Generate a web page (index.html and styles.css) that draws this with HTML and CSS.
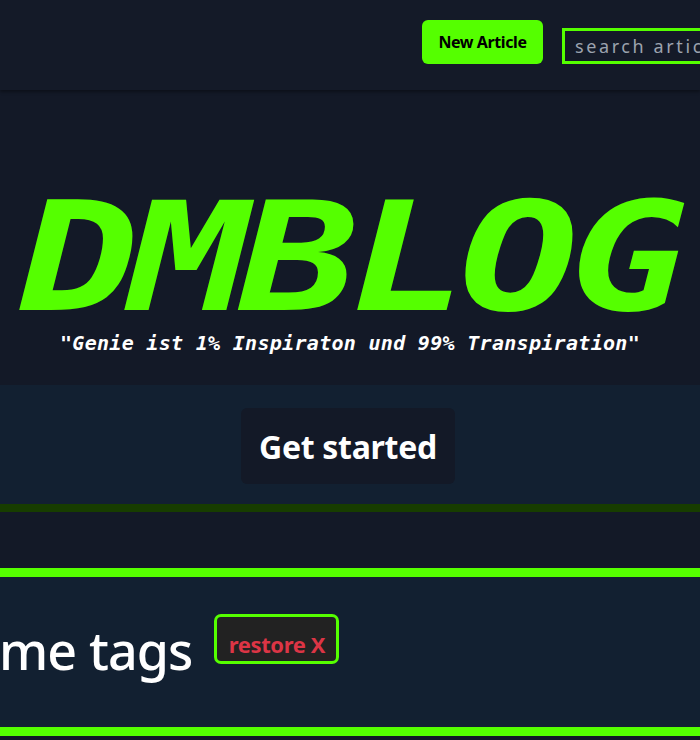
FILE: index.html
```html
<!DOCTYPE html>
<html lang="de">
<head>
<meta charset="utf-8">
<title>DMBLOG</title>
<link rel="stylesheet" href="styles.css">
</head>
<body>
  <header class="nav">
    <a class="btn-new" href="#">New Article</a>
    <input class="search" type="text" placeholder="search articles">
  </header>
  <section class="hero">
    <h1 class="logo">DMBLOG</h1>
    <p class="quote">"Genie ist 1% Inspiraton und 99% Transpiration"</p>
  </section>
  <section class="start">
    <a class="btn-start" href="#">Get started</a>
  </section>
  <div class="line-dark"></div>
  <div class="band"></div>
  <div class="line-bright"></div>
  <section class="tags">
    <h2 class="tags-title">me tags</h2>
    <button class="restore">restore X</button>
  </section>
  <div class="line-bright"></div>
</body>
</html>
```
FILE: styles.css
```css
html, body {
  margin: 0;
  padding: 0;
  overflow-x: hidden;
  background: #111827;
  font-family: "Noto Sans", "Open Sans", sans-serif;
}
.nav {
  height: 89px;
  background: #141a28;
  display: flex;
  align-items: center;
  justify-content: flex-end;
  padding-top: 1px;
  box-shadow: 0 2px 3px rgba(0,0,0,0.35);
  position: relative;
  z-index: 1;
}
.btn-new {
  display: flex;
  align-items: center;
  justify-content: center;
  width: 121px;
  height: 44px;
  margin-top: -8px;
  background: #55ff00;
  color: #000;
  border-radius: 6px;
  font-weight: 700;
  font-size: 16px;
  text-decoration: none;
  letter-spacing: -0.4px;
  flex: none;
}
.search {
  flex: none;
  box-sizing: border-box;
  width: 200px;
  height: 36px;
  margin-left: 19px;
  margin-right: -62px;
  border: 3px solid #55ff00;
  background: #141a28;
  color: #9ca3af;
  font-family: "Noto Sans", sans-serif;
  font-size: 18px;
  letter-spacing: 2.6px;
  padding: 0 10px;
  outline: none;
}
.search::placeholder {
  color: #9ca3af;
}
.hero {
  height: 295px;
  background: #131927;
  display: flex;
  flex-direction: column;
  align-items: center;
}
.logo {
  margin: 108px 0 0;
  font-family: "DejaVu Sans Mono", monospace;
  font-style: italic;
  font-weight: 700;
  font-size: 152px;
  line-height: 120px;
  height: 120px;
  color: #55ff00;
  letter-spacing: -7px;
  transform: scaleX(1.3);
}
.quote {
  margin: 13px 0 0;
  font-family: "DejaVu Sans Mono", monospace;
  font-style: italic;
  font-weight: 700;
  font-size: 20px;
  line-height: 24px;
  color: #fff;
  letter-spacing: 0.3px;
}
.start {
  height: 119px;
  background: #122031;
  display: flex;
  justify-content: center;
  align-items: flex-start;
}
.btn-start {
  margin-top: 23px;
  margin-right: 4px;
  width: 214px;
  height: 76px;
  display: flex;
  align-items: center;
  justify-content: center;
  background: #131927;
  color: #fff;
  border-radius: 6px;
  font-weight: 700;
  font-size: 32px;
  text-decoration: none;
  letter-spacing: -0.3px;
}
.line-dark {
  height: 8px;
  background: #173d00;
}
.band {
  height: 56px;
  background: #131927;
}
.line-bright {
  height: 9px;
  background: #55ff00;
}
.tags {
  height: 150px;
  background: #122031;
  display: flex;
  align-items: flex-start;
}
.tags-title {
  margin: 33px 0 0 -1px;
  font-size: 52px;
  font-weight: 500;
  color: #fff;
  line-height: 80px;
  letter-spacing: -0.9px;
}
.restore {
  margin: 37px 0 0 22px;
  box-sizing: border-box;
  width: 125px;
  height: 50px;
  border: 3px solid #55ff00;
  border-radius: 7px;
  background: #222222;
  color: #dc3545;
  font-family: "Noto Sans", sans-serif;
  font-weight: 700;
  font-size: 22px;
  padding: 10px 0 0;
  letter-spacing: -0.4px;
}
```
